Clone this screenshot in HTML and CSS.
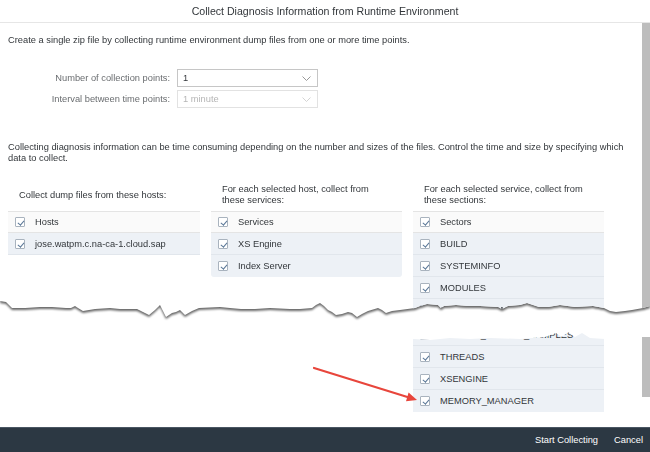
FILE: index.html
```html
<!DOCTYPE html>
<html lang="en">
<head>
<meta charset="utf-8">
<title>Collect Diagnosis Information from Runtime Environment</title>
<link rel="stylesheet" href="styles.css">
</head>
<body>
<div class="dialog">
  <div class="tear-top">
    <div class="sheet">
      <header class="dlg-header">
        <h1 class="dlg-title">Collect Diagnosis Information from Runtime Environment</h1>
      </header>
      <div class="scroller">
        <div class="content">
          <p class="intro">Create a single zip file by collecting runtime environment dump files from one or more time points.</p>
          <div class="form">
            <label class="form-label">Number of collection points:</label>
            <div class="select">
              <span>1</span>
              <svg class="chev" width="9" height="5" viewBox="0 0 9 5"><polyline points="0.5,0.5 4.5,4.5 8.5,0.5" fill="none" stroke="currentColor" stroke-width="0.9"/></svg>
            </div>
            <label class="form-label">Interval between time points:</label>
            <div class="select is-disabled">
              <span>1 minute</span>
              <svg class="chev" width="9" height="5" viewBox="0 0 9 5"><polyline points="0.5,0.5 4.5,4.5 8.5,0.5" fill="none" stroke="currentColor" stroke-width="0.9"/></svg>
            </div>
          </div>
          <p class="note">Collecting diagnosis information can be time consuming depending on the number and sizes of the files. Control the time and size by specifying which data to collect.</p>
          <div class="columns">
            <section class="col">
              <div class="col-head">Collect dump files from these hosts:</div>
              <div class="table">
                <div class="row head"><span class="cb"></span><span>Hosts</span></div>
                <div class="row"><span class="cb"></span><span>jose.watpm.c.na-ca-1.cloud.sap</span></div>
              </div>
            </section>
            <section class="col">
              <div class="col-head">For each selected host, collect from these services:</div>
              <div class="table rounded">
                <div class="row head"><span class="cb"></span><span>Services</span></div>
                <div class="row"><span class="cb"></span><span>XS Engine</span></div>
                <div class="row"><span class="cb"></span><span>Index Server</span></div>
              </div>
            </section>
            <section class="col">
              <div class="col-head">For each selected service, collect from these sections:</div>
              <div class="table">
                <div class="row head"><span class="cb"></span><span>Sectors</span></div>
                <div class="row"><span class="cb"></span><span>BUILD</span></div>
                <div class="row"><span class="cb"></span><span>SYSTEMINFO</span></div>
                <div class="row"><span class="cb"></span><span>MODULES</span></div>
                <div class="row"><span class="cb"></span><span>SESSION_CONTEXT</span></div>
              </div>
            </section>
          </div>
        </div>
        <div class="scrollbar"></div>
      </div>
    </div>
  </div>

  <div class="sheet-bottom">
    <div class="bottom-grid">
      <div class="table cont">
        <div class="row"><span class="cb"></span><span>SERVICE_THREAD_SAMPLES</span></div>
        <div class="row"><span class="cb"></span><span>THREADS</span></div>
        <div class="row"><span class="cb"></span><span>XSENGINE</span></div>
        <div class="row"><span class="cb"></span><span>MEMORY_MANAGER</span></div>
      </div>
    </div>
    <div class="scrollbar thumb"></div>
  </div>

  <footer class="dlg-footer">
    <button class="btn">Start Collecting</button>
    <button class="btn">Cancel</button>
  </footer>

  <svg class="annot" width="650" height="452" viewBox="0 0 650 452">
    <line x1="314" y1="368" x2="409" y2="397.5" stroke="#e8463c" stroke-width="2.2" stroke-linecap="round"/>
    <polygon points="417,400 406,401.2 408.6,392.6" fill="#e8463c"/>
  </svg>
</div>
</body>
</html>
```

FILE: styles.css
```css
* { box-sizing: border-box; }

html, body {
  margin: 0;
  padding: 0;
  background: #ffffff;
}

body {
  font-family: "Liberation Sans", Arial, sans-serif;
  font-size: 9.3px;
  color: #32363a;
  width: 650px;
  height: 452px;
  overflow: hidden;
}

.dialog {
  position: relative;
  width: 650px;
  height: 452px;
  display: flex;
  flex-direction: column;
}

/* ---------- top torn sheet ---------- */
.tear-top {
  flex: none;
  height: 322px;
  filter: drop-shadow(0 2px 1.3px rgba(0, 0, 0, 0.6));
}

.sheet {
  height: 322px;
  background: #ffffff;
  overflow: hidden;
  display: flex;
  flex-direction: column;
  clip-path: polygon(0 0, 650px 0, 650px 306px, 643px 308px, 632px 310px, 625px 311px, 616px 312px, 610px 311px, 604px 308px, 593px 306px, 575px 307px, 560px 305px, 548px 307px, 539px 307px, 533px 305px, 527px 303px, 520px 305px, 508px 306px, 502px 309px, 498px 307px, 480px 306px, 468px 306px, 456px 305px, 444px 306px, 441px 308px, 438px 305px, 427px 304px, 420px 306px, 415px 308px, 400px 310px, 392px 311px, 386px 313px, 382px 310px, 378px 308px, 368px 311px, 362px 314px, 357px 317px, 352px 313px, 348px 312px, 342px 314px, 336px 315px, 332px 312px, 328px 310px, 324px 306px, 320px 303px, 316px 305px, 312px 308px, 300px 309px, 290px 309px, 270px 308px, 255px 309px, 241px 309px, 230px 308px, 220px 307px, 199px 308px, 192px 311px, 185px 315px, 182px 312px, 180px 310px, 176px 312px, 172px 313px, 166px 317px, 163px 311px, 160px 305px, 157px 308px, 155px 310px, 149px 315px, 143px 312px, 137px 309px, 120px 309px, 110px 308px, 95px 309px, 83px 311px, 78px 308px, 75px 306px, 71px 308px, 66px 308px, 52px 307px, 40px 307px, 25px 308px, 12px 308px, 8px 304px, 6px 302px, 0 301px);
}

.dlg-header {
  flex: none;
  height: 23px;
  border-bottom: 1px solid #e6e6e6;
}

.dlg-title {
  margin: 0;
  font-size: 10.6px;
  font-weight: normal;
  line-height: 22px;
  text-align: center;
  color: #32363a;
}

.scroller {
  flex: 1;
  min-height: 0;
  display: flex;
}

.content {
  flex: 1;
  padding: 11px 8px 0 8px;
}

.scrollbar {
  flex: none;
  width: 8px;
  background: #bdbdbd;
}

.intro {
  margin: 0;
  line-height: 12px;
}

/* ---------- form ---------- */
.form {
  display: grid;
  grid-template-columns: 162px 141px;
  column-gap: 7px;
  row-gap: 3px;
  margin-top: 23px;
  align-items: center;
}

.form-label {
  text-align: right;
  color: #6a6d70;
}

.select {
  height: 18px;
  border: 1px solid #c6c6c6;
  background: #ffffff;
  display: flex;
  align-items: center;
  justify-content: space-between;
  padding: 0 6px 0 5px;
  color: #32363a;
}

.select .chev { color: #8c8c8c; }

.select.is-disabled {
  border-color: #e2e2e2;
  color: #b5b5b5;
}

.select.is-disabled .chev { color: #cfcfcf; }

.note {
  margin: 34px 0 0;
  line-height: 11px;
}

/* ---------- columns ---------- */
.columns {
  display: grid;
  grid-template-columns: 192px 191px 191px;
  column-gap: 11px;
  margin-top: 19px;
  align-items: start;
}

.col-head {
  height: 24px;
  display: flex;
  align-items: center;
  padding: 0 8px 0 11px;
  line-height: 11px;
  margin-bottom: 4px;
}

.row {
  height: 22px;
  display: flex;
  align-items: center;
  gap: 10px;
  padding-left: 7px;
  background: #edf1f6;
  border-bottom: 1px solid #e1e6ec;
  white-space: nowrap;
}

.row.head {
  background: #fafafa;
  border-top: 1px solid #e4e4e4;
  border-bottom-color: #e4e4e4;
}

.table.rounded .row:last-child {
  border-bottom: 0;
  border-radius: 0 0 3px 3px;
}

.cb {
  flex: none;
  position: relative;
  width: 10px;
  height: 10px;
  border: 1px solid #a9b3be;
  background: #ffffff;
  border-radius: 1px;
}

.cb::after {
  content: "";
  position: absolute;
  left: 3px;
  top: 1px;
  width: 2.5px;
  height: 5px;
  border: solid #5a7797;
  border-width: 0 1px 1px 0;
  transform: rotate(40deg);
}

/* ---------- bottom torn sheet ---------- */
.sheet-bottom {
  flex: none;
  margin-top: 2px;
  height: 103px;
  display: flex;
  background: #ffffff;
  clip-path: polygon(0 14px, 40px 12px, 90px 15px, 140px 13px, 200px 14px, 260px 12px, 330px 15px, 380px 13px, 414px 15px, 430px 16px, 450px 14px, 470px 15px, 490px 14px, 520px 15px, 545px 13px, 556px 9px, 562px 13px, 568px 8px, 575px 13px, 582px 9px, 590px 14px, 605px 15px, 620px 13px, 643px 13px, 650px 12px, 650px 103px, 0 103px);
}

.bottom-grid {
  flex: 1;
  padding-left: 8px;
  display: grid;
  grid-template-columns: 192px 191px 191px;
  column-gap: 11px;
  align-content: start;
}

.table.cont {
  grid-column: 3;
}

.table.cont .row:last-child {
  border-bottom: 0;
}

.scrollbar.thumb {
  margin-top: 13px;
  height: 60px;
}

/* ---------- footer ---------- */
.dlg-footer {
  flex: none;
  height: 25px;
  background: #2c3843;
  border-top: 1px solid #4a5663;
  display: flex;
  justify-content: flex-end;
  align-items: center;
  gap: 16px;
  padding-right: 7px;
}

.btn {
  background: none;
  border: 0;
  padding: 0;
  color: #ffffff;
  font: inherit;
}

/* ---------- annotation ---------- */
.annot {
  position: absolute;
  left: 0;
  top: 0;
  pointer-events: none;
}
```
